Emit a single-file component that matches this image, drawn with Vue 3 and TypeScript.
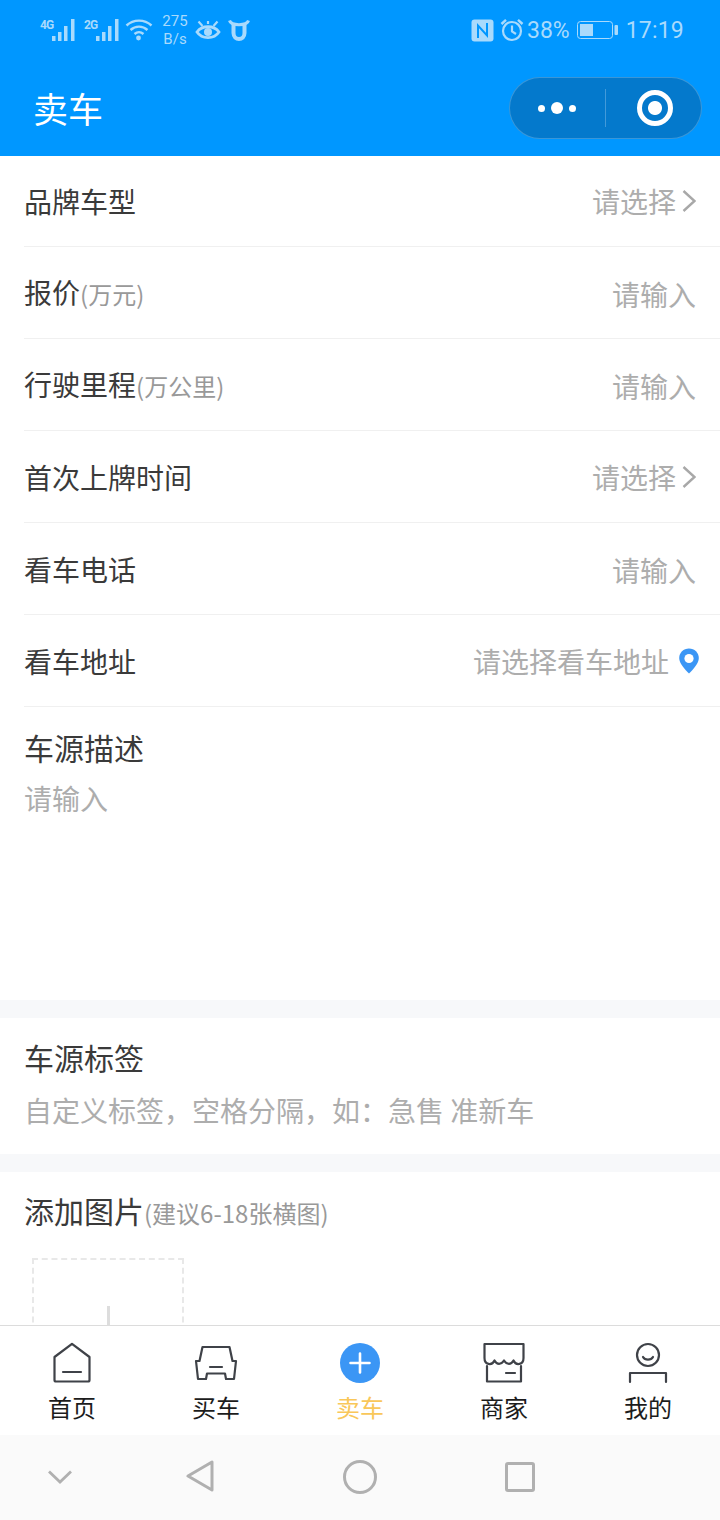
<script setup lang="ts">
type Row = { label: string; unit?: string; value: string; kind?: "arrow" | "pin" };
type Tab = { name: string; icon: string; active?: boolean };

const rows: Row[] = [
  { label: "品牌车型", value: "请选择", kind: "arrow" },
  { label: "报价", unit: "(万元)", value: "请输入" },
  { label: "行驶里程", unit: "(万公里)", value: "请输入" },
  { label: "首次上牌时间", value: "请选择", kind: "arrow" },
  { label: "看车电话", value: "请输入" },
  { label: "看车地址", value: "请选择看车地址", kind: "pin" },
];

const tabs: Tab[] = [
  { name: "首页", icon: "home" },
  { name: "买车", icon: "car" },
  { name: "卖车", icon: "sell", active: true },
  { name: "商家", icon: "shop" },
  { name: "我的", icon: "me" },
];

const networks = ["4G", "2G"];
</script>

<template>
  <div class="phone">
    <header class="head">
      <div class="status">
        <div class="status-left">
          <div v-for="net in networks" :key="net" class="sig">
            <span class="net">{{ net }}</span>
            <svg width="24" height="22" viewBox="0 0 24 22">
              <g fill="#a9dafc">
                <rect x="0" y="17" width="3.500" height="5" />
                <rect x="6" y="13" width="3.500" height="9" />
                <rect x="12" y="7" width="3.500" height="15" />
                <rect x="19" y="0" width="3.500" height="22" />
              </g>
            </svg>
          </div>
          <svg class="wifi" width="28" height="24" viewBox="0 0 28 24" fill="none" stroke="#a9dafc" stroke-width="2.400">
            <path d="M1.500 7.500C8.500 1 19.500 1 26.500 7.500" />
            <path d="M5.500 12C10.500 7.500 17.500 7.500 22.500 12" />
            <path d="M9.500 16C12.500 13.500 15.500 13.500 18.500 16" />
            <circle cx="13.500" cy="20" r="2.400" fill="#a9dafc" stroke="none" />
          </svg>
          <div class="speed">275<br />B/s</div>
          <svg class="eye" width="26" height="24" viewBox="0 0 26 24" fill="none" stroke="#a9dafc" stroke-width="2.800">
            <path d="M2 14C7 7 19 7 24 14C19 21.500 7 21.500 2 14Z" />
            <circle cx="13" cy="14" r="4" fill="#a9dafc" stroke="none" />
            <path d="M3.500 3.500L7.500 8M22.500 3.500L18.500 8M13 3V6" stroke-width="2.200" />
          </svg>
          <svg class="cow" width="22" height="24" viewBox="0 0 22 24" fill="none" stroke="#a9dafc" stroke-width="4">
            <path d="M5.500 7V15C5.500 23 16.500 23 16.500 15V7" />
            <path d="M1.500 2.500C3 8 19 8 20.500 2.500" stroke-width="3" />
          </svg>
        </div>
        <div class="status-right">
          <svg width="23" height="23" viewBox="0 0 23 23">
            <rect x="0.500" y="0.500" width="22" height="22" rx="3" fill="#a9dafc" />
            <path d="M7 19V6.500L16 16.500V4" fill="none" stroke="#0097ff" stroke-width="2" />
          </svg>
          <svg class="alarm" width="24" height="24" viewBox="0 0 24 24" fill="none" stroke="#a9dafc" stroke-width="2.200">
            <circle cx="12" cy="13" r="9" />
            <path d="M12 7.500V13.500L16 16" />
            <path d="M1.500 6L6 1.800M22.500 6L18 1.800" stroke-width="2.400" />
          </svg>
          <span class="pct">38%</span>
          <svg class="batt" width="41" height="18" viewBox="0 0 41 18">
            <rect x="0.500" y="0.500" width="35" height="17" rx="3" fill="none" stroke="#a9dafc" />
            <rect x="3" y="3" width="13" height="12" fill="#a9dafc" />
            <rect x="37.500" y="4" width="3.500" height="10" rx="1" fill="#a9dafc" />
          </svg>
          <span class="time">17:19</span>
        </div>
      </div>
      <div class="titlebar">
        <span class="title">卖车</span>
        <div class="capsule">
          <div class="cap-dots">
            <i class="dot" /><i class="dot big" /><i class="dot" />
          </div>
          <div class="cap-line" />
          <div class="cap-target"><i /></div>
        </div>
      </div>
    </header>

    <main class="content">
      <div v-for="row in rows" :key="row.label" class="row">
        <div class="label">{{ row.label }}<span v-if="row.unit" class="unit">{{ row.unit }}</span></div>
        <div class="value" :class="row.kind ?? 'input'">
          <span>{{ row.value }}</span>
          <svg v-if="row.kind === 'arrow'" class="arrow" width="14" height="24" viewBox="0 0 14 24" fill="none" stroke="#a8a8a8" stroke-width="2.400">
            <path d="M1.500 2L12.500 12L1.500 22" />
          </svg>
          <svg v-if="row.kind === 'pin'" class="pin" width="20" height="26" viewBox="0 0 20 26">
            <path d="M10 0.500C4.500 0.500 0.200 4.700 0.200 10C0.200 15.500 6 21.500 10 25.500C14 21.500 19.800 15.500 19.800 10C19.800 4.700 15.500 0.500 10 0.500Z" fill="#3b96f5" />
            <circle cx="10" cy="10.500" r="4.600" fill="#fff" />
          </svg>
        </div>
      </div>

      <section class="desc">
        <div class="sec-title">车源描述</div>
        <div class="hint small">请输入</div>
      </section>
      <section class="tags">
        <div class="sec-title">车源标签</div>
        <div class="hint">自定义标签，空格分隔，如：急售 准新车</div>
      </section>
      <section class="pics">
        <div class="sec-title">添加图片<span class="unit">(建议6-18张横图)</span></div>
        <div class="upload"><i /></div>
      </section>
    </main>

    <nav class="tabbar">
      <div v-for="tab in tabs" :key="tab.name" class="tab" :class="{ active: tab.active }">
        <svg width="44" height="44" viewBox="0 0 44 44" fill="none" stroke="#3f4248" stroke-width="2.200" stroke-linejoin="round" stroke-linecap="round">
          <template v-if="tab.icon === 'home'">
            <path d="M4.500 15L22 1.800L39.500 15V38C39.500 39 39 39.500 38 39.500H6C5 39.500 4.500 39 4.500 38Z" />
            <path d="M13 30H31" />
          </template>
          <template v-else-if="tab.icon === 'car'">
            <path d="M8.500 5H35.500L38.500 19H42L40 37H32L31 31.500H13L12 37H4L2 19H5.500Z" />
            <path d="M16 25H28" />
          </template>
          <template v-else-if="tab.icon === 'sell'">
            <circle cx="22" cy="21" r="20" fill="#3b96f5" stroke="none" />
            <path d="M12.500 21H31.500M22 11.500V30.500" stroke="#fff" stroke-width="2.600" />
          </template>
          <template v-else-if="tab.icon === 'shop'">
            <path d="M2.500 2H41.500V16C41.500 23 34 24 31.500 18.500C29 23 25 23 22 18.500C19 23 15 23 12.500 18.500C10 24 2.500 23 2.500 16Z" />
            <path d="M5 24V39.500H39V24M24 31H33" />
          </template>
          <template v-else>
            <circle cx="22" cy="13" r="11" />
            <path d="M17 15C19 18.500 25 18.500 27 15" />
            <path d="M4 40V31H40V40" />
          </template>
        </svg>
        <span class="tab-name">{{ tab.name }}</span>
      </div>
    </nav>

    <footer class="sysnav">
      <svg width="24" height="14" viewBox="0 0 24 14" fill="none" stroke="#b0b0b0" stroke-width="2.800" class="n-down">
        <path d="M1 1.500L12 12L23 1.500" />
      </svg>
      <svg width="28" height="32" viewBox="0 0 28 32" fill="none" stroke="#b0b0b0" stroke-width="3" stroke-linejoin="round" class="n-back">
        <path d="M26 2V30L2 16Z" />
      </svg>
      <svg width="34" height="34" viewBox="0 0 34 34" fill="none" stroke="#b0b0b0" stroke-width="3" class="n-home">
        <circle cx="17" cy="17" r="15.500" />
      </svg>
      <svg width="30" height="30" viewBox="0 0 30 30" fill="none" stroke="#b0b0b0" stroke-width="3" stroke-linejoin="round" class="n-recent">
        <rect x="1.500" y="1.500" width="27" height="27" rx="1.500" />
      </svg>
    </footer>
  </div>
</template>

<style>
html,
body {
  margin: 0;
  background: #fff;
}
</style>

<style scoped>
.phone {
  display: flex;
  flex-direction: column;
  width: 720px;
  height: 1520px;
  overflow: hidden;
  font-family: "Noto Sans CJK SC", "Liberation Sans", sans-serif;
  color: #3a3a3a;
  background: #fff;
}

.head {
  flex: none;
  height: 156px;
  background: #0097ff;
  color: #fff;
}

.status {
  display: flex;
  justify-content: space-between;
  align-items: center;
  height: 60px;
  padding: 0 36px 0 40px;
}

.status-left,
.status-right {
  display: flex;
  align-items: center;
}

.sig {
  display: flex;
  align-items: flex-start;
  width: 36px;
  height: 22px;
  margin-right: 8px;
}

.net {
  width: 12px;
  font-family: "Roboto", sans-serif;
  font-size: 12px;
  font-weight: 700;
  line-height: 13px;
  letter-spacing: -1px;
  white-space: nowrap;
  color: #a9dafc;
}

.wifi {
  margin-left: -3px;
}

.speed {
  width: 30px;
  margin-left: 7px;
  font-family: "Roboto", sans-serif;
  font-size: 15px;
  line-height: 18px;
  text-align: center;
  color: #a9dafc;
}

.eye {
  margin-left: 5px;
}

.cow {
  margin-left: 7px;
}

.alarm {
  margin-left: 6px;
}

.pct,
.time {
  font-family: "Roboto", sans-serif;
  font-size: 23px;
  color: #a9dafc;
}

.pct {
  margin-left: 3px;
}

.batt {
  margin-left: 7px;
}

.time {
  margin-left: 8px;
  letter-spacing: 0.2px;
}

.titlebar {
  display: flex;
  justify-content: space-between;
  align-items: center;
  height: 96px;
  padding: 0 18px 0 33px;
  box-sizing: border-box;
}

.title {
  font-size: 35px;
  line-height: 40px;
}

.capsule {
  display: flex;
  align-items: center;
  width: 193px;
  height: 62px;
  box-sizing: border-box;
  border: 1px solid rgba(255, 255, 255, 0.22);
  border-radius: 31px;
  background: #0479cc;
}

.cap-dots {
  display: flex;
  align-items: center;
  justify-content: center;
  gap: 6px;
  width: 93px;
  margin-right: 2px;
}

.dot {
  width: 7px;
  height: 7px;
  border-radius: 50%;
  background: #fff;
}

.dot.big {
  width: 12px;
  height: 12px;
}

.cap-line {
  width: 1px;
  height: 38px;
  background: rgba(255, 255, 255, 0.25);
}

.cap-target {
  flex: 1;
  display: flex;
  justify-content: center;
  padding-left: 2px;
}

.cap-target i {
  display: flex;
  width: 36px;
  height: 36px;
  box-sizing: border-box;
  border: 5px solid #fff;
  border-radius: 50%;
  background: radial-gradient(circle, #fff 0 6.500px, transparent 7.500px);
}

.content {
  flex: 1;
  min-height: 0;
  overflow: hidden;
}

.row {
  display: flex;
  justify-content: space-between;
  align-items: center;
  height: 92px;
  margin-left: 24px;
  padding-right: 24px;
  border-bottom: 1px solid #f0f0f0;
  box-sizing: border-box;
}

.row:first-child {
  height: 91px;
}

.label {
  font-size: 28px;
  line-height: 40px;
}

.sec-title {
  font-size: 30px;
  line-height: 40px;
}

.unit {
  font-size: 24px;
  color: #999;
}

.value {
  display: flex;
  align-items: center;
  font-size: 28px;
  line-height: 40px;
  color: #adadad;
}

.value.input {
  margin-top: 2px;
}

.arrow {
  margin-left: 6px;
}

.value.pin {
  margin-right: -3px;
}

.pin {
  margin-left: 10px;
}

.desc {
  height: 311px;
  padding: 20px 24px 0;
  box-sizing: border-box;
  border-bottom: 18px solid #f7f8fa;
}

.hint {
  margin-top: 13px;
  font-size: 28px;
  line-height: 40px;
  color: #adadad;
}

.hint.small {
  margin-top: 11px;
}

.tags {
  height: 154px;
  padding: 19px 24px 0;
  box-sizing: border-box;
  border-bottom: 18px solid #f7f8fa;
}

.pics {
  padding: 18px 24px 0;
}

.upload {
  position: relative;
  width: 152px;
  height: 152px;
  margin: 25px 0 0 8px;
  box-sizing: border-box;
  border: 2px dashed #e8e8e8;
}

.upload i {
  position: absolute;
  left: 73px;
  top: 46px;
  width: 3px;
  height: 60px;
  background: #ddd;
}

.tabbar {
  flex: none;
  display: flex;
  height: 110px;
  box-sizing: border-box;
  padding-top: 16px;
  border-top: 1px solid #dcdcdc;
  background: #fff;
}

.tab {
  flex: 1;
  display: flex;
  flex-direction: column;
  align-items: center;
}

.tab-name {
  margin-top: 6px;
  font-size: 24px;
  line-height: 30px;
  color: #1c1c1c;
}

.tab.active .tab-name {
  color: #f9c75a;
}

.sysnav {
  flex: none;
  position: relative;
  height: 85px;
  background: #fafafa;
}

.sysnav svg {
  position: absolute;
}

.n-down {
  left: 48px;
  top: 35px;
}

.n-back {
  left: 186px;
  top: 25px;
}

.n-home {
  left: 343px;
  top: 25px;
}

.n-recent {
  left: 505px;
  top: 27px;
}
</style>
